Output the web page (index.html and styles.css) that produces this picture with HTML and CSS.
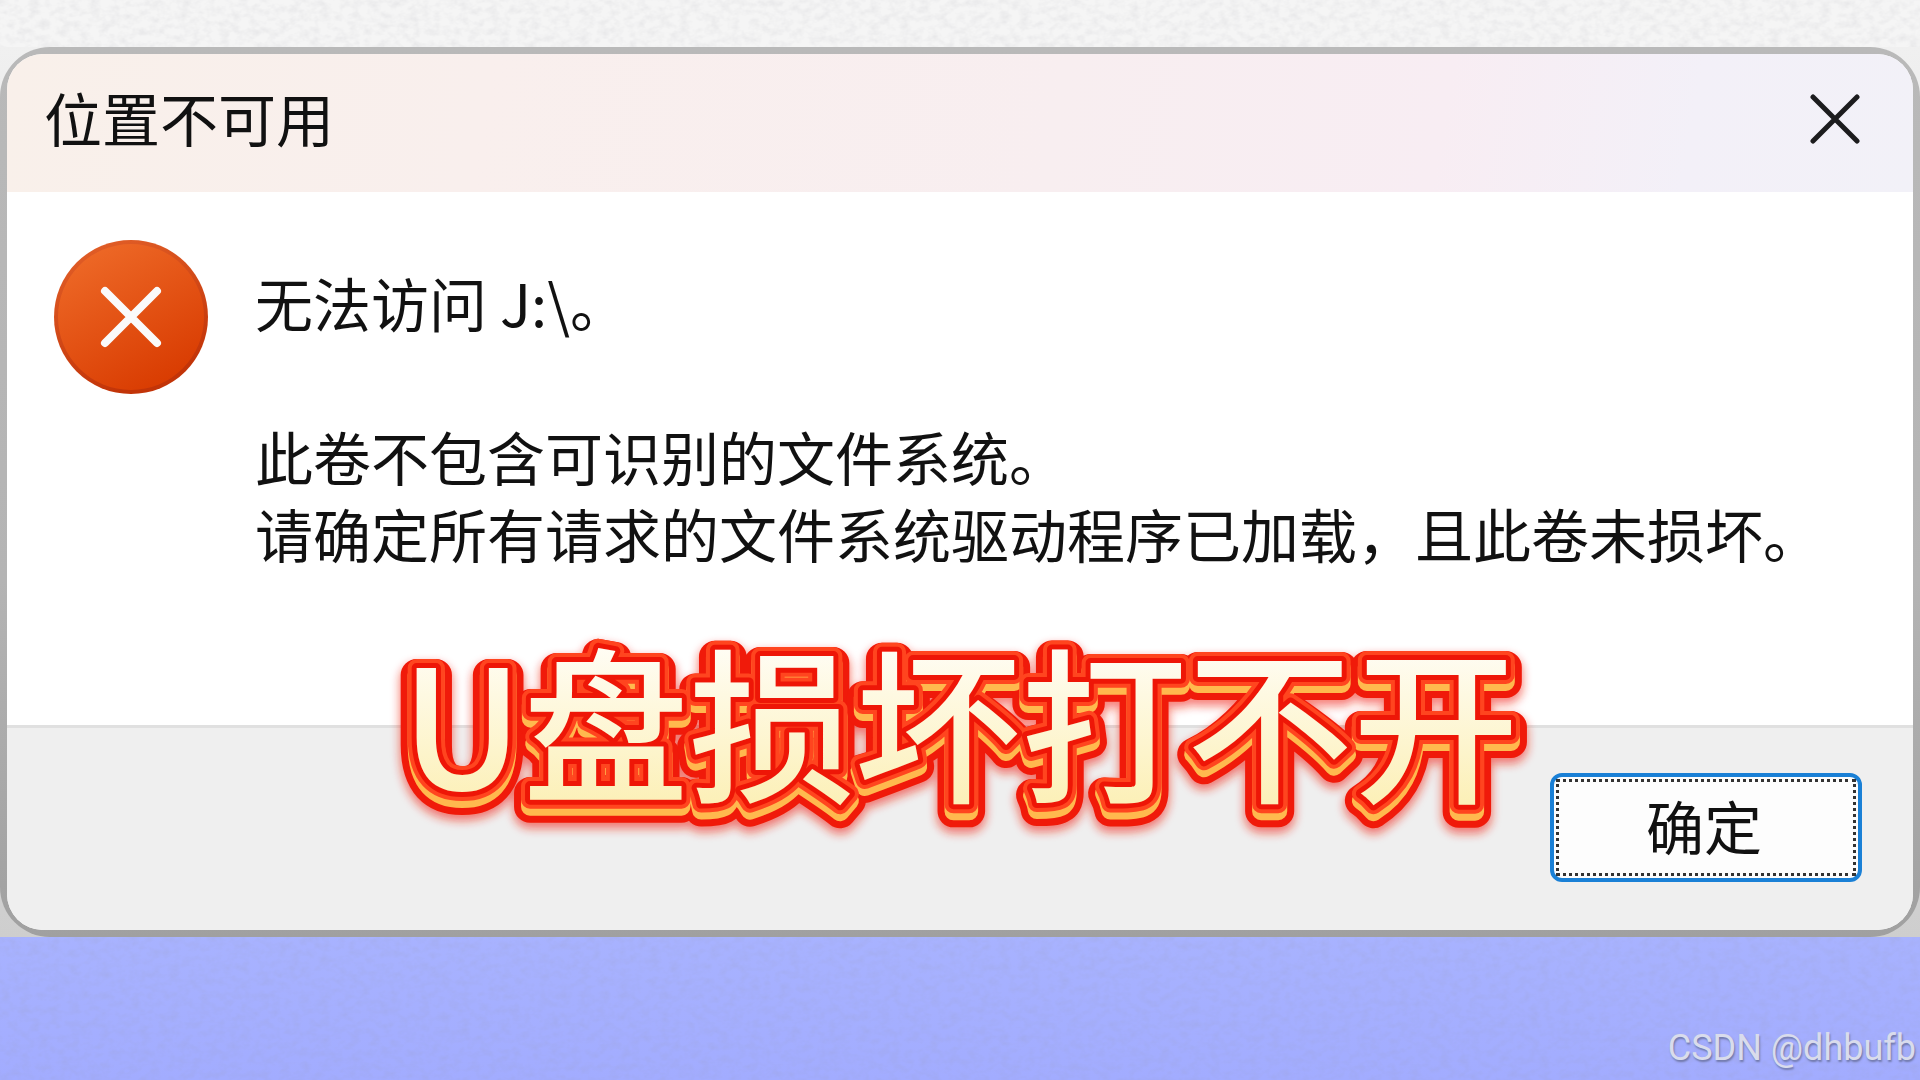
FILE: index.html
```html
<!DOCTYPE html>
<html lang="zh-CN">
<head>
  <meta charset="UTF-8">
  <meta name="viewport" content="width=device-width, initial-scale=1.0">
  <title>位置不可用</title>
  <link rel="stylesheet" href="styles.css">
</head>
<body>

<svg class="paper" aria-hidden="true">
  <filter id="grain" x="0" y="0" width="100%" height="100%">
    <feTurbulence type="fractalNoise" baseFrequency="0.1 0.14" numOctaves="3" seed="4"/>
    <feColorMatrix values="0 0 0 0 0.3  0 0 0 0 0.3  0 0 0 0 0.35  0.26 0 0 0 -0.1"/>
  </filter>
  <rect width="100%" height="100%" filter="url(#grain)"/>
</svg>

<main class="stage">
  <div class="frame">
    <section class="dialog" role="alertdialog" aria-labelledby="title" aria-describedby="message">
      <header class="titlebar">
        <h1 id="title">位置不可用</h1>
        <button class="close" type="button" aria-label="关闭">
          <svg viewBox="0 0 50 50"><path d="M3 3L47 47M47 3L3 47"/></svg>
        </button>
      </header>

      <div class="content">
        <svg class="error-icon" viewBox="0 0 154 154" aria-hidden="true">
          <defs>
            <linearGradient id="orange" x1="0.2" y1="0" x2="0.75" y2="1">
              <stop offset="0" stop-color="#ee6a28"/>
              <stop offset="1" stop-color="#d83a00"/>
            </linearGradient>
            <linearGradient id="rim" x1="0" y1="0" x2="0.4" y2="1">
              <stop offset="0" stop-color="#e4622a"/>
              <stop offset="1" stop-color="#c23408"/>
            </linearGradient>
          </defs>
          <circle cx="77" cy="77" r="77" fill="url(#rim)"/>
          <circle cx="77" cy="77" r="73" fill="url(#orange)"/>
          <path d="M51 51L103 103M103 51L51 103" stroke="#fafafa" stroke-width="8" stroke-linecap="round"/>
        </svg>
        <div class="message" id="message">
          <p>无法访问 J:\。</p>
          <p>此卷不包含可识别的文件系统。<br>请确定所有请求的文件系统驱动程序已加载，且此卷未损坏。</p>
        </div>
      </div>

      <footer class="actions">
        <button class="ok" type="button">确定</button>
      </footer>
    </section>
  </div>

  <!-- Caption, drawn as stacked outlines of the same text -->
  <svg class="caption" role="img" aria-label="U盘损坏打不开">
    <defs>
      <linearGradient id="cream" x1="0" y1="0" x2="0" y2="1">
        <stop offset="0.2" stop-color="#fffdf5"/>
        <stop offset="0.85" stop-color="#fcf0b8"/>
      </linearGradient>
      <filter id="glow" x="-10%" y="-20%" width="120%" height="140%">
        <feGaussianBlur stdDeviation="5"/>
      </filter>
      <text id="words" x="50%" y="170" text-anchor="middle">U盘损坏打不开</text>
    </defs>
    <use class="layer-glow" href="#words" y="12"/>
    <use class="layer-outer" href="#words" y="7"/>
    <use class="layer-gold" href="#words" y="7"/>
    <use class="layer-orange" href="#words"/>
    <use class="layer-red" href="#words"/>
    <use class="layer-face" href="#words"/>
  </svg>
</main>

<p class="watermark">CSDN @dhbufb</p>

</body>
</html>
```

FILE: styles.css
```css
/* General Styles */
* {
  box-sizing: border-box;
}
body {
  margin: 0;
  min-height: 100vh;
  padding-top: 47px;
  display: flex;
  flex-direction: column;
  position: relative;
  font-family: "Noto Sans CJK SC", sans-serif;
  color: #111;
  background: linear-gradient(#f5f5f5 0, #f5f5f5 50%, #b8c4ff 50%, #a2acff 100%);
}
h1, p {
  margin: 0;
}
button {
  font: inherit;
  color: inherit;
  cursor: pointer;
}
.paper {
  position: absolute;
  top: 0;
  left: 0;
  width: 100%;
  height: 100%;
}

/* Window */
.stage {
  position: relative;
  background: linear-gradient(#f0f0f0, #cecece);
}
.frame {
  padding: 7px;
  border-radius: 50px;
  background: linear-gradient(#b9b9b9, #b4b4b4 60%, #a0a0a0);
}
.dialog {
  border-radius: 36px;
  overflow: hidden;
  background: #fff;
}
.titlebar {
  display: flex;
  align-items: center;
  justify-content: space-between;
  height: 138px;
  padding: 0 53px 8px 37px;
  background: linear-gradient(100deg, #f9f0ea 0, #f9efed 25%, #f8eef0 55%, #f8edf3 75%, #f3f0f8 88%, #f2f1f8 100%);
}
.titlebar h1 {
  padding-bottom: 4px;
  font-size: 58px;
  font-weight: 400;
  line-height: 77px;
}
.close {
  display: flex;
  padding: 0;
  border: none;
  background: none;
}
.close svg {
  width: 50px;
  height: 50px;
  fill: none;
  stroke: #1c1c1e;
  stroke-width: 5;
  stroke-linecap: round;
}

/* Message */
.content {
  display: flex;
  gap: 47px;
  padding: 48px 47px 149px;
}
.error-icon {
  flex: none;
  width: 154px;
  height: 154px;
}
.message {
  display: flex;
  flex-direction: column;
  gap: 77px;
  padding-top: 24px;
  font-size: 58px;
  line-height: 77px;
}
.message p:last-child {
  margin-bottom: 4px;
}
.actions {
  display: flex;
  justify-content: flex-end;
  padding: 45px 51px 48px;
  border-top: 3px solid #e0e0e0;
  background: #efefef;
}
.ok {
  position: relative;
  width: 312px;
  height: 109px;
  padding: 0 4px 4px 0;
  font-size: 58px;
  line-height: 77px;
  border: 4px solid #1a80d6;
  border-radius: 12px;
  background: #fdfdfd;
}
.ok::before {
  content: "";
  position: absolute;
  inset: 2px;
  border: 3px dotted #333;
}

/* Caption */
.caption {
  position: absolute;
  top: 573px;
  left: 0;
  width: 100%;
  height: 240px;
  overflow: visible;
  pointer-events: none;
  font-size: 166px;
  font-weight: 500;
  stroke-linejoin: round;
}
.layer-glow {
  fill: #f01a0a;
  stroke: #f01a0a;
  stroke-width: 34px;
  opacity: 0.55;
  filter: url(#glow);
}
.layer-outer {
  fill: #f01a0a;
  stroke: #f01a0a;
  stroke-width: 32px;
}
.layer-gold {
  fill: #ffb94e;
  stroke: #ffb94e;
  stroke-width: 18px;
}
.layer-orange {
  fill: #ff451f;
  stroke: #ff451f;
  stroke-width: 18px;
}
.layer-red {
  fill: #ee1607;
  stroke: #ee1607;
  stroke-width: 10px;
}
.layer-face {
  fill: url(#cream);
}

/* Watermark */
.watermark {
  position: relative;
  margin-top: auto;
  padding: 0 4px 11px;
  text-align: right;
  font-family: Roboto, sans-serif;
  font-size: 36px;
  line-height: 42px;
  color: #d9dcec;
  text-shadow: 1px 2px 2px #7078a8;
}
```
